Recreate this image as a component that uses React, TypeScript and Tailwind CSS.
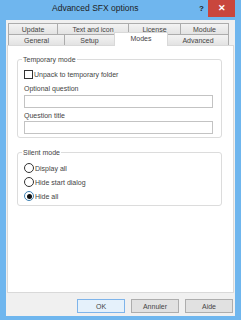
export default function App() {
  const row1 = [
    { label: 'Update', w: 'w-[50px]' },
    { label: 'Text and icon', w: 'w-[72px]' },
    { label: 'License', w: 'w-[53px]' },
    { label: 'Module', w: 'w-[49px]' },
  ];
  const radios = [
    { label: 'Display all', on: false },
    { label: 'Hide start dialog', on: false },
    { label: 'Hide all', on: true },
  ];

  return (
    <div className="w-[241px] h-[320px] bg-[#6fb6ee] flex flex-col text-[7px] leading-[9px] text-[#444]" style={{ fontFamily: '"Liberation Sans", Arial, sans-serif' }}>
      {/* title bar */}
      <div className="h-[20px] flex items-start shrink-0">
        <div className="pl-[52px] pt-[3px] text-[8.5px] leading-[11px] text-[#1e1e1e] w-[195px]">Advanced SFX options</div>
        <div className="pt-[3px] text-[8px] leading-[11px] font-bold text-[#1e1e1e] w-[13px] text-center">?</div>
        <div className="w-[27px] h-[17px] bg-[#c9463d] flex items-center justify-center text-white text-[9px] font-bold leading-none">✕</div>
      </div>

      {/* client area */}
      <div className="mx-[6px] mb-[4px] flex-1 bg-[#f0f0f0] flex flex-col">
        {/* tabs */}
        <div className="pt-[3px] pl-[2px]">
          <div className="flex h-[11px]">
            {row1.map((t, i) => (
              <div
                key={t.label}
                className={`${t.w} ${i > 0 ? '-ml-px' : ''} border border-[#acacac] border-b-0 bg-gradient-to-b from-[#f3f3f3] to-[#e3e3e3] flex items-center justify-center`}
              >
                {t.label}
              </div>
            ))}
          </div>
          <div className="flex h-[11px] items-start">
            <div className="w-[57px] h-[11px] border border-[#acacac] border-b-0 bg-gradient-to-b from-[#f3f3f3] to-[#e3e3e3] flex items-center justify-center">General</div>
            <div className="w-[51px] h-[11px] -ml-px border border-[#acacac] border-b-0 bg-gradient-to-b from-[#f3f3f3] to-[#e3e3e3] flex items-center justify-center">Setup</div>
            <div className="relative z-10 w-[54px] h-[14px] -mt-[2px] -ml-px border border-[#d9d9d9] border-b-0 bg-white flex items-center justify-center pb-[2px]">Modes</div>
            <div className="w-[62px] h-[11px] -ml-px border border-[#acacac] border-b-0 bg-gradient-to-b from-[#f3f3f3] to-[#e3e3e3] flex items-center justify-center">Advanced</div>
          </div>
        </div>

        {/* panel */}
        <div className="mx-[1px] h-[248px] bg-white border border-[#d9d9d9] flex flex-col">
          <fieldset className="ml-[9px] mr-[11px] mt-[9px] border border-[#dcdcdc] rounded-[3px] px-[6px] pb-[3px] pt-0">
            <legend className="px-[1px] ml-[-2px]">Temporary mode</legend>
            <div className="flex items-center gap-[1px] mt-[6px]">
              <div className="w-[9px] h-[9px] border border-[#333] bg-white" />
              <span>Unpack to temporary folder</span>
            </div>
            <div className="mt-[5px]">Optional question</div>
            <div className="mt-[2px] h-[13px] w-[189px] border border-[#c3c3c3] bg-white" />
            <div className="mt-[3px]">Question title</div>
            <div className="mt-[1px] h-[13px] w-[189px] border border-[#c3c3c3] bg-white" />
          </fieldset>

          <fieldset className="ml-[9px] mr-[11px] mt-[10px] border border-[#dcdcdc] rounded-[3px] px-[6px] pb-[4px] pt-0">
            <legend className="px-[1px] ml-[-2px]">Silent mode</legend>
            <div className="flex flex-col gap-[4px] mt-[6px]">
              {radios.map((r) => (
                <div key={r.label} className="flex items-center gap-[1px] h-[10px]">
                  <div className={`w-[10px] h-[10px] rounded-full border bg-white flex items-center justify-center ${r.on ? 'border-[#3c7fb1]' : 'border-[#333]'}`}>
                    {r.on && <div className="w-[5px] h-[5px] rounded-full bg-[#111]" />}
                  </div>
                  <span>{r.label}</span>
                </div>
              ))}
            </div>
          </fieldset>
        </div>

        {/* buttons */}
        <div className="flex justify-end gap-[6px] pr-[2px] mt-[6px]">
          <div className="w-[48px] h-[14px] border border-[#7eb4ea] bg-[#e5f1fb] flex items-center justify-center">OK</div>
          <div className="w-[48px] h-[14px] border border-[#adadad] bg-[#e1e1e1] flex items-center justify-center">Annuler</div>
          <div className="w-[48px] h-[14px] border border-[#adadad] bg-[#e1e1e1] flex items-center justify-center">Aide</div>
        </div>
      </div>
    </div>
  );
}
